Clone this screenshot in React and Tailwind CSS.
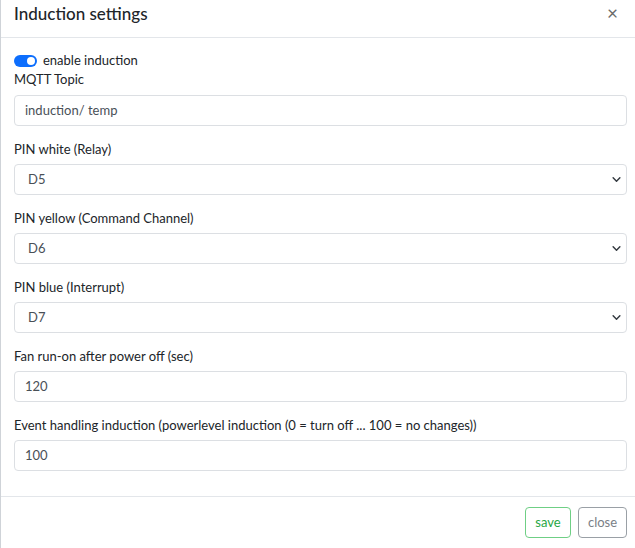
import React from "react";

function Chevron() {
  return (
    <svg width="9" height="9" viewBox="0 0 16 16" className="shrink-0">
      <path d="M2 5l6 6 6-6" fill="none" stroke="#343a40" strokeWidth="2.6" strokeLinecap="round" strokeLinejoin="round" />
    </svg>
  );
}

function Label({ children }) {
  return <div className="text-[13px] leading-[18px] text-[#212529]">{children}</div>;
}

function Input({ value }) {
  return (
    <div className="h-[31px] border border-[#dcdfe3] rounded-[4px] flex items-center px-[10px] text-[13px] text-[#495057]">
      {value}
    </div>
  );
}

function Select({ value }) {
  return (
    <div className="h-[31px] border border-[#dcdfe3] rounded-[4px] flex items-center justify-between pl-[13px] pr-[5px] text-[13px] text-[#495057]">
      <span>{value}</span>
      <Chevron />
    </div>
  );
}

function Field({ label, children }) {
  return (
    <div className="flex flex-col gap-[6px]">
      <Label>{label}</Label>
      {children}
    </div>
  );
}

export default function App() {
  return (
    <div
      className="w-[635px] h-[548px] bg-white border-l border-[#cfd3d8] flex flex-col overflow-hidden"
      style={{ fontFamily: 'Lato, "Noto Sans", sans-serif' }}
    >
      <div className="h-[38px] shrink-0 border-b border-[#e3e6ea] flex items-start justify-between pl-[13px] pr-[17px] pt-[3px]">
        <div className="text-[17px] leading-[22px] text-[#212529] font-medium">Induction settings</div>
        <div className="text-[19px] leading-[19px] text-[#6c6c6c]">×</div>
      </div>
      <div className="flex-1 pl-[13px] pr-[8px] pt-[17px] flex flex-col">
        <div className="flex items-center gap-[6px] h-[12px]">
          <div className="w-[23px] h-[12px] rounded-full bg-[#0d6efd] relative">
            <div className="absolute right-[2px] top-[2px] w-[8px] h-[8px] rounded-full bg-white" />
          </div>
          <span className="text-[13px] text-[#212529]">enable induction</span>
        </div>
        <div className="mt-[3px] flex flex-col gap-[7px]">
          <Label>MQTT Topic</Label>
          <Input value="induction/ temp" />
        </div>
        <div className="mt-[14px] flex flex-col gap-[14px]">
          <Field label="PIN white (Relay)"><Select value="D5" /></Field>
          <Field label="PIN yellow (Command Channel)"><Select value="D6" /></Field>
          <Field label="PIN blue (Interrupt)"><Select value="D7" /></Field>
          <Field label="Fan run-on after power off (sec)"><Input value="120" /></Field>
          <Field label="Event handling induction (powerlevel induction (0 = turn off ... 100 = no changes))"><Input value="100" /></Field>
        </div>
      </div>
      <div className="h-[52px] shrink-0 border-t border-[#e3e6ea] flex items-center justify-end gap-[7px] pr-[8px]">
        <div className="h-[31px] w-[46px] justify-center flex items-center border border-[#6fcf85] rounded-[4px] text-[13px] text-[#28a745]">save</div>
        <div className="h-[31px] w-[49px] justify-center flex items-center border border-[#9aa0a6] rounded-[4px] text-[13px] text-[#7a8086]">close</div>
      </div>
    </div>
  );
}
